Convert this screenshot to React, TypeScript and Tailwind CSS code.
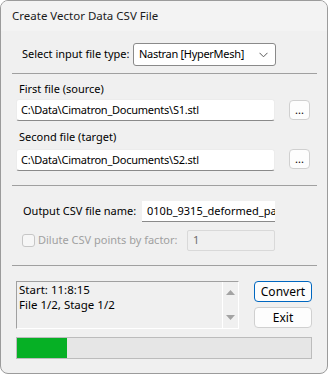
import React from "react";

const font = { fontFamily: '"Noto Sans", "Segoe UI", sans-serif' };

function Sep({ mt }: { mt: string }) {
  return <div className={`${mt} ml-[11px] w-[305px] h-px bg-[#a0a0a0]`} />;
}

function TextBox({ value, w }: { value: string; w: string }) {
  return (
    <div
      className={`${w} h-[22px] bg-white border border-[#ececec] border-b-[#8a8a8a] rounded-[3px] flex items-center pl-[4px] overflow-hidden whitespace-nowrap text-[11px] tracking-[-0.25px] text-black`}
    >
      {value}
    </div>
  );
}

function DotsBtn() {
  return (
    <div className="w-[21px] h-[20px] bg-[#fdfdfd] border border-[#d0d0d0] rounded-[4px] flex items-center justify-center text-[11px] leading-none text-black pb-[2px]">
      ...
    </div>
  );
}

export default function App() {
  return (
    <div className="w-[329px] h-[375px] bg-white whitespace-nowrap" style={font}>
      <div className="w-[328px] h-[374px] border border-[#9b9b9b] rounded-[8px] overflow-hidden bg-[#f0f0f0] flex flex-col">
        <div className="h-[30px] bg-[#f3f3f3] flex items-center pl-[11px] text-[11.5px] text-[#1a1a1a]">
          Create Vector Data CSV File
        </div>

        {/* select row */}
        <div className="mt-[12px] h-[23px] flex items-center text-[11px] text-black">
          <div className="ml-[21px] w-[111px]">Select input file type:</div>
          <div className="w-[143px] h-[23px] bg-white border border-[#8a8a8a] rounded-[3px] flex items-center justify-between pl-[5px] pr-[7px]">
            <span className="tracking-[-0.3px]">Nastran [HyperMesh]</span>
            <svg width="9" height="6" viewBox="0 0 9 6">
              <path d="M0.5 0.8 L4.5 4.8 L8.5 0.8" fill="none" stroke="#5a5a5a" strokeWidth="1" />
            </svg>
          </div>
        </div>

        <Sep mt="mt-[7px]" />

        <div className="mt-[8px] ml-[18px] h-[15px] flex items-center text-[11px] text-black">
          First file (source)
        </div>
        <div className="mt-[2px] h-[22px] flex items-center">
          <div className="ml-[15px]">
            <TextBox value="C:\Data\Cimatron_Documents\S1.stl" w="w-[259px]" />
          </div>
          <div className="ml-[14px]">
            <DotsBtn />
          </div>
        </div>

        <div className="mt-[9px] ml-[18px] h-[15px] flex items-center text-[11px] text-black">
          Second file (target)
        </div>
        <div className="mt-[4px] h-[22px] flex items-center">
          <div className="ml-[15px]">
            <TextBox value="C:\Data\Cimatron_Documents\S2.stl" w="w-[259px]" />
          </div>
          <div className="ml-[14px] -mt-[2px]">
            <DotsBtn />
          </div>
        </div>

        <Sep mt="mt-[14px]" />

        <div className="mt-[15px] h-[21px] flex items-center text-[11px] text-black">
          <div className="ml-[22px] w-[119px]">Output CSV file name:</div>
          <div className="w-[133px] h-[21px] bg-white border-b border-[#8a8a8a] flex items-center pl-[5px] overflow-hidden whitespace-nowrap">
            010b_9315_deformed_part
          </div>
        </div>

        <div className="mt-[8px] h-[21px] flex items-center text-[11px]">
          <div className="ml-[21px] w-[13px] h-[13px] border border-[#c6c6c6] bg-[#f6f6f6] rounded-[3px]" />
          <div className="ml-[3px] w-[149px] text-[#a0a0a0]">Dilute CSV points by factor:</div>
          <div className="w-[88px] h-[21px] border border-[#d9d9d9] bg-[#f0f0f0] rounded-[2px] flex items-center pl-[5px] text-[#6d6d6d]">
            1
          </div>
        </div>

        <Sep mt="mt-[14px]" />

        <div className="mt-[15px] flex">
          <div className="ml-[15px] w-[223px] h-[48px] border border-[#a0a0a0] border-r-white border-b-white flex">
            <div className="flex-1 pl-[2px] text-[11.5px] leading-[15px] text-black">
              <div className="h-[15px] flex items-center">Start: 11:8:15</div>
              <div className="h-[15px] flex items-center">File 1/2, Stage 1/2</div>
            </div>
            <div className="w-[16px] border-l border-white flex flex-col items-center justify-between py-[8px]">
              <svg width="9" height="5" viewBox="0 0 9 5">
                <path d="M0 5 L4.5 0 L9 5 Z" fill="#a3a3a3" />
              </svg>
              <svg width="9" height="5" viewBox="0 0 9 5">
                <path d="M0 0 L4.5 5 L9 0 Z" fill="#a3a3a3" />
              </svg>
            </div>
          </div>
          <div className="ml-[15px] flex flex-col gap-[5px]">
            <div className="w-[58px] h-[21px] bg-[#fdfdfd] border border-[#0067c0] rounded-[4px] flex items-center justify-center text-[12px] text-black">
              Convert
            </div>
            <div className="w-[58px] h-[21px] bg-[#fdfdfd] border border-[#d0d0d0] rounded-[4px] flex items-center justify-center text-[12px] text-black">
              Exit
            </div>
          </div>
        </div>

        <div className="mt-[8px] ml-[15px] w-[296px] h-[22px] border border-[#bcbcbc] bg-[#e6e6e6]">
          <div className="h-full bg-[#06b025]" style={{ width: 50 }} />
        </div>
      </div>
    </div>
  );
}
